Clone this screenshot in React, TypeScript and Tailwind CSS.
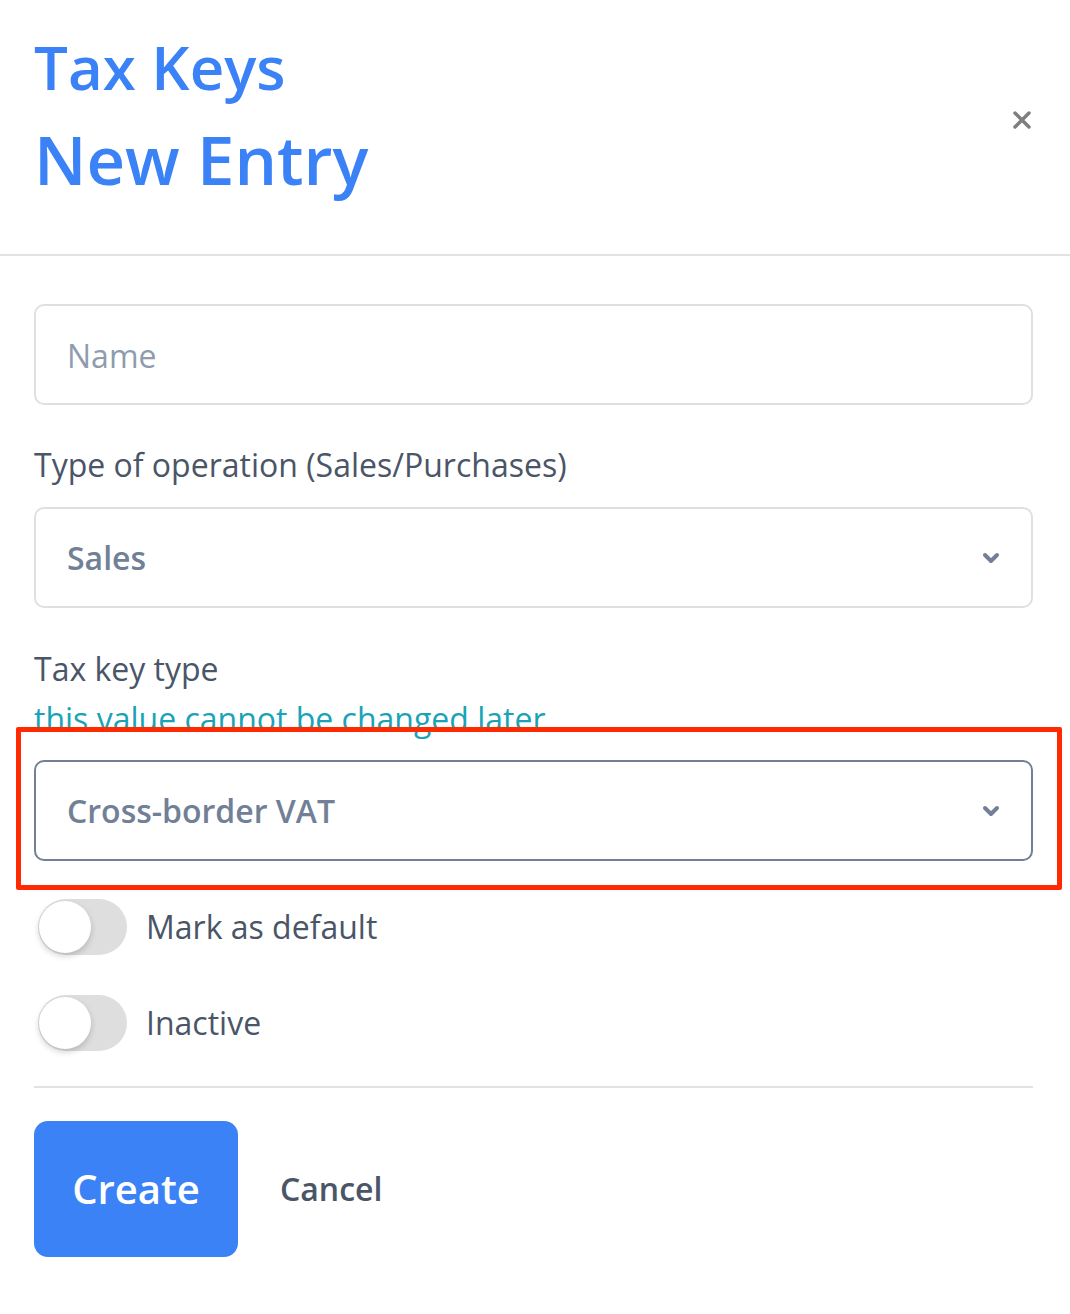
import React from "react";

type ToggleProps = {
  label: string;
};

const Chevron = () => (
  <svg width="18" height="12" viewBox="0 0 18 12" className="shrink-0">
    <polyline
      points="3,3 9,9 15,3"
      fill="none"
      stroke="#718096"
      strokeWidth="4"
      strokeLinecap="round"
      strokeLinejoin="round"
    />
  </svg>
);

const Toggle = ({ label }: ToggleProps) => (
  <div className="flex items-center gap-[19px]">
    <div className="ml-[4px] flex h-[56px] w-[89px] items-center rounded-full bg-[#dedede] px-[1px]">
      <div className="h-[52px] w-[52px] rounded-full bg-white shadow-[0_3px_6px_rgba(0,0,0,0.18)]" />
    </div>
    <span className="text-[32px] leading-[48px] text-[#4a5568]">{label}</span>
  </div>
);

export default function App() {
  return (
    <div className="min-h-[1314px] w-[1070px] bg-white font-['Open_Sans',sans-serif]">
      <header className="flex items-center justify-between pl-[34px] pr-[38px] pt-[31px] pb-[55px]">
        <div className="font-semibold text-[#3b82f6]">
          <h1 className="text-[60px] leading-[72px]">Tax Keys</h1>
          <h2 className="mt-[16px] text-[67px] leading-[80px]">New Entry</h2>
        </div>
        <button className="mt-[10px] text-[#7f7f7f]" aria-label="Close">
          <svg width="20" height="20" viewBox="0 0 20 20">
            <path d="M3 3 L17 17 M17 3 L3 17" stroke="currentColor" strokeWidth="3.5" strokeLinecap="round" />
          </svg>
        </button>
      </header>
      <div className="h-[2px] bg-[#e2e2e2]" />

      <form className="pl-[34px] pr-[37px] pt-[48px]">
        <div className="flex h-[101px] items-center rounded-[10px] border-2 border-[#e0e0e0] px-[31px]">
          <span className="mt-[2px] text-[32px] text-[#8e9cad]">Name</span>
        </div>

        <label className="mt-[36px] block text-[32px] leading-[48px] text-[#4a5568]">
          Type of operation (Sales/Purchases)
        </label>
        <div className="mt-[18px] flex h-[101px] items-center justify-between rounded-[10px] border-2 border-[#e0e0e0] pl-[31px] pr-[31px]">
          <span className="mt-[1px] text-[32px] font-semibold text-[#718096]">Sales</span>
          <Chevron />
        </div>

        <label className="mt-[37px] block text-[32px] leading-[48px] text-[#4a5568]">Tax key type</label>
        <p className="mt-[2px] text-[32px] leading-[48px] text-[#1aa3b7]">this value cannot be changed later</p>
        <div className="relative mt-[17px]">
          <div className="flex h-[101px] items-center justify-between rounded-[10px] border-2 border-[#718096] pl-[31px] pr-[31px]">
            <span className="mt-[1px] text-[32px] font-semibold text-[#718096]">Cross-border VAT</span>
            <Chevron />
          </div>
          <div className="pointer-events-none absolute -bottom-[29px] -left-[18px] -right-[29px] -top-[33px] rounded-[2px] border-[5px] border-[#ff2a00]" />
        </div>

        <div className="mt-[38px] flex flex-col gap-[40px]">
          <Toggle label="Mark as default" />
          <Toggle label="Inactive" />
        </div>

        <div className="mt-[35px] h-[2px] bg-[#e2e2e2]" />

        <div className="mt-[33px] flex items-center gap-[42px]">
          <button
            type="button"
            className="h-[136px] w-[204px] rounded-[14px] bg-[#3b82f6] text-[40px] font-semibold text-white"
          >
            Create
          </button>
          <button type="button" className="text-[32px] font-semibold text-[#4a5568]">
            Cancel
          </button>
        </div>
      </form>
    </div>
  );
}
